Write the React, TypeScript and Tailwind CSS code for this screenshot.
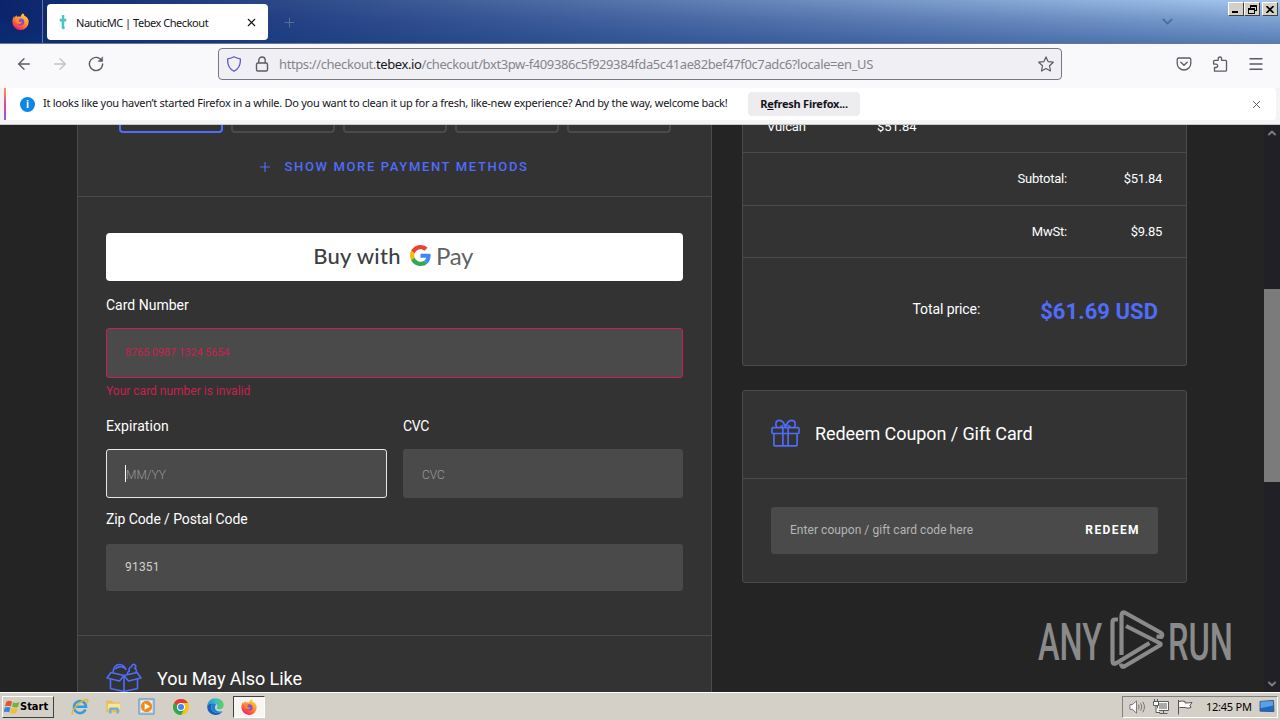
import React from 'react';
import { ArrowLeft, ArrowRight, ChevronDown, ChevronUp, Menu, Plus, X } from 'lucide-react';

const orders = [
  { label: 'Subtotal:', value: '$51.84', height: 'h-[53px]' },
  { label: 'MwSt:', value: '$9.85', height: 'h-[52px]' },
];

const FirefoxIcon: React.FC<{ className?: string }> = ({ className }) => (
  <svg viewBox="0 0 16 16" className={className}>
    <defs>
      <linearGradient id="ffx" x1="0.8" y1="0" x2="0.2" y2="1">
        <stop offset="0" stopColor="#ffd83b" />
        <stop offset="0.4" stopColor="#ff9a2b" />
        <stop offset="0.75" stopColor="#ff4a41" />
        <stop offset="1" stopColor="#e31587" />
      </linearGradient>
    </defs>
    <path
      d="M10.2 0.3c1 .8 1.4 1.700 1.600 2.600 1.100.3 2 1 2.500 1.600.9 1.100 1.400 2.500 1.400 4A7.600 7.400 0 0 1 .4 8.600C.3 6.400 1 4.400 2 2.900l.4 1.500C3 3.300 3.600 2.600 4.400 2l.3 1.700C6 3.200 7 3.300 7.800 3.800 8.600 2.300 9.200 1.200 10.200.3z"
      fill="url(#ffx)"
    />
    <circle cx="8.300" cy="8.400" r="3.200" fill="#8a4ad6" />
    <path d="M3.600 5.600c1.700-.6 3.100 0 4.200.7-1 .3-1.600.9-1.500 1.600 1 .8 2.400.6 3.200.3-.4 1.500-1.600 2.300-3 2.100C4.700 9.900 3.500 8 3.600 5.600z" fill="#ff8a2a" />
  </svg>
);

const GoogleG: React.FC<{ className?: string }> = ({ className }) => (
  <svg viewBox="0 0 48 48" className={className}>
    <path fill="#EA4335" d="M24 9.500c3.540 0 6.710 1.220 9.210 3.600l6.850-6.850C35.900 2.380 30.470 0 24 0 14.620 0 6.510 5.380 2.560 13.220l7.980 6.190C12.430 13.720 17.740 9.500 24 9.500z" />
    <path fill="#4285F4" d="M46.980 24.550c0-1.570-.15-3.090-.38-4.550H24v9.020h12.940c-.58 2.960-2.260 5.480-4.780 7.180l7.730 6c4.510-4.180 7.090-10.360 7.090-17.650z" />
    <path fill="#FBBC05" d="M10.530 28.590c-.48-1.450-.76-2.990-.76-4.590s.27-3.140.76-4.590l-7.980-6.190C.92 16.460 0 20.120 0 24c0 3.880.92 7.540 2.560 10.780l7.970-6.190z" />
    <path fill="#34A853" d="M24 48c6.480 0 11.930-2.130 15.890-5.810l-7.730-6c-2.150 1.450-4.920 2.300-8.160 2.300-6.260 0-11.570-4.220-13.470-9.910l-7.980 6.190C6.510 42.620 14.620 48 24 48z" />
  </svg>
);

const TabStrip: React.FC = () => (
  <div className="relative h-[44px] bg-[linear-gradient(90deg,#0a246a_0%,#a6caf0_100%)]">
    <div className="flex h-full border-b border-[#6c7893] bg-[linear-gradient(180deg,rgba(10,50,130,0)_0%,rgba(10,40,120,0.25)_45%,rgba(10,50,125,0.5)_100%)]">
      <div className="flex w-[43px] items-center justify-center border-r border-white/35">
        <FirefoxIcon className="-mt-px ml-[-2px] size-[17px]" />
      </div>
      <div className="mt-1 ml-1 flex h-9 w-[221px] items-center rounded bg-white">
        <svg viewBox="0 0 8 16" className="ml-[12px] h-[15px] w-[8px]">
          <path d="M3 0h2.300v4h2.200v2.800H5.300v5L6.200 14 4 15.500 2.600 14V6.800H.5V4H3z" fill="#48c6be" />
        </svg>
        <span className="ml-[9px] w-[132px] pt-[2px] text-[11px] tracking-[-0.46px] whitespace-nowrap text-[#15141a]">NauticMC | Tebex Checkout</span>
        <X className="ml-[37px] size-[13px] text-[#15141a]" strokeWidth={2} />
      </div>
      <Plus className="mt-[15px] ml-[14px] size-[15px] text-[#5c6f96]" strokeWidth={1.5} />
      <ChevronDown className="mt-[13px] ml-[862px] size-[17px] text-[#4d6a9f]" strokeWidth={2.4} />
    </div>
    <div className="absolute top-[2px] right-[2px] flex">
      <div className="flex h-[14px] w-[16px] items-end border border-t-white border-r-[#404040] border-b-[#404040] border-l-white bg-[#d4d0c8] pb-[2px] pl-[3px]">
        <div className="h-[2px] w-[6px] bg-black" />
      </div>
      <div className="flex h-[14px] w-[16px] items-center justify-center border border-t-white border-r-[#404040] border-b-[#404040] border-l-white bg-[#d4d0c8]">
        <svg viewBox="0 0 9 9" className="size-[9px]" shapeRendering="crispEdges" fill="none" stroke="#000">
          <path d="M2.500 3V.5h6v5H7M2 1.500h7M.5 3.500h6v5h-6zM0 4.500h7" />
        </svg>
      </div>
      <div className="ml-[2px] flex h-[14px] w-[16px] items-center justify-center border border-t-white border-r-[#404040] border-b-[#404040] border-l-white bg-[#d4d0c8]">
        <svg viewBox="0 0 8 7" className="h-[7px] w-[8px]" stroke="#000" strokeWidth="1.600">
          <path d="M.5 0l7 7M7.500 0l-7 7" />
        </svg>
      </div>
    </div>
  </div>
);

const NavBar: React.FC = () => (
  <div className="flex h-[44px] items-center bg-[#f9f9fb] pb-1 text-[#5b5b66]">
    <ArrowLeft className="ml-[15px] size-[18px]" strokeWidth={1.8} />
    <ArrowRight className="ml-[18px] size-[18px] text-[#c0c0c6]" strokeWidth={1.8} />
    <svg viewBox="0 0 16 16" className="ml-[19px] size-[16px]" fill="none" stroke="currentColor" strokeWidth="1.400" strokeLinecap="round">
      <path d="M13.600 4.500A6.600 6.600 0 1 0 14.600 8" />
      <path d="M14.600 1.200v4.200h-4.200z" fill="currentColor" strokeWidth="0.600" />
    </svg>
    <div className="ml-[114px] flex h-8 w-[844px] items-center rounded border border-[#77777f] bg-[#f0f0f4]">
      <svg viewBox="0 0 16 16" className="ml-[7px] size-4" fill="none" stroke="#5f57c4" strokeWidth="1.300" strokeLinejoin="round">
        <path d="M8 .8c1.800 1.100 4 1.700 6.300 2C14.800 8.500 12.300 13 8 15.300 3.700 13 1.200 8.500 1.700 2.800 4 2.500 6.200 1.900 8 .8z" />
      </svg>
      <svg viewBox="0 0 16 16" className="ml-[12px] size-4" fill="none" stroke="#5b5b66" strokeWidth="1.400">
        <rect x="2.500" y="7" width="11" height="8" rx="1.500" />
        <path d="M4.800 7V4.200a3.200 3.200 0 0 1 6.400 0V7" />
      </svg>
      <span className="ml-[9px] w-[600px] pt-px text-[13px] tracking-[-0.395px] whitespace-nowrap text-[#85858d]">
        https://checkout.<span className="text-[#15141a]">tebex.io</span>/checkout/bxt3pw-f409386c5f929384fda5c41ae82bef47f0c7adc6?locale=en_US
      </span>
      <svg viewBox="0 0 16 16" className="mr-[7px] ml-auto size-4" fill="none" stroke="#5b5b66" strokeWidth="1.200" strokeLinejoin="round">
        <path d="M8 .9l2.100 4.700 5.200.6-3.800 3.500 1 5.300L8 12.400 3.500 15l1-5.300L.7 6.200l5.200-.6z" />
      </svg>
    </div>
    <svg viewBox="0 0 16 16" className="ml-[114px] size-4" fill="none" stroke="currentColor" strokeWidth="1.300" strokeLinecap="round" strokeLinejoin="round">
      <path d="M2.700 2h10.600a1.500 1.500 0 0 1 1.500 1.500v3.700a6.800 6.800 0 0 1-13.600 0V3.500A1.500 1.500 0 0 1 2.700 2z" />
      <path d="M4.800 6.200L8 9.300l3.200-3.100" />
    </svg>
    <svg viewBox="0 0 16 16" className="ml-[20px] size-4" fill="none" stroke="currentColor" strokeWidth="1.300" strokeLinejoin="round">
      <path d="M2.500 15.200V11.500H4a1.700 1.700 0 0 0 0-3.400H1.600V5.300a1 1 0 0 1 1-1h3.600V2.700a1.700 1.700 0 0 1 3.400 0v1.600h3.900a1 1 0 0 1 1 1v8.900a1 1 0 0 1-1 1z" />
    </svg>
    <Menu className="ml-[19px] size-[18px]" strokeWidth={1.8} />
  </div>
);

const Notice: React.FC = () => (
  <div className="h-[37px] border-b border-[#c9c9cc] bg-[#f4f4f5] pr-1 pl-1">
    <div className="flex h-8 items-center rounded bg-white">
      <div className="h-8 w-[2px] bg-[linear-gradient(180deg,#f2975a,#e0479a_50%,#9059d8)]" />
      <div className="ml-[14px] flex size-[15px] items-center justify-center rounded-full bg-[#0d87e5] text-[10px] leading-none font-bold text-white">i</div>
      <span className="ml-[8px] w-[690px] pb-px text-[11px] tracking-[-0.265px] whitespace-nowrap text-[#15141a]">
        It looks like you haven’t started Firefox in a while. Do you want to clean it up for a fresh, like-new experience? And by the way, welcome back!
      </span>
      <button className="ml-[15px] h-6 w-[112px] rounded bg-[#ededf0] text-[11px] font-bold tracking-[-0.25px] whitespace-nowrap text-[#15141a]">
        R<span className="underline">e</span>fresh Firefox...
      </button>
      <X className="mr-[13px] ml-auto size-[13px] text-[#5b5b66]" strokeWidth={1.8} />
    </div>
  </div>
);

const GiftIcon: React.FC = () => (
  <svg viewBox="0 0 30 28" className="h-[28px] w-[29px]" fill="none" stroke="#4f6dfa" strokeWidth="1.700" strokeLinejoin="round">
    <rect x="1" y="8.500" width="28" height="6" rx="1" />
    <path d="M3 14.500v11.800a1 1 0 0 0 1 1h22a1 1 0 0 0 1-1V14.500M12.300 8.500v18.800M17.700 8.500v18.800" />
    <path d="M15 8.500C14 4 11.500 1 8.500 1 5 1 4 4.500 6 8.500M15 8.500C16 4 18.500 1 21.500 1 25 1 26 4.500 24 8.500M9.500 8.500c.5-1.500 1.500-2.200 3.500-2.500M20.500 8.500c-.5-1.500-1.500-2.200-3.500-2.500" />
  </svg>
);

const BoxIcon: React.FC = () => (
  <svg viewBox="0 0 36 30" className="h-[30px] w-[36px]" fill="none" stroke="#4f6dfa" strokeWidth="1.600" strokeLinejoin="round">
    <path d="M5 9.500L18 12.500 31 9.500 35 15 22.500 18 18 12.500l-4.500 5.500L1 15z" />
    <path d="M4.500 16v9.500L18 28.500l13.500-3V16M18 12.500v16" />
    <path d="M7 9.500C7.500 4.500 10 1.500 13.500 1.500S19 4 20 7M9.500 6c1.500-2 6-3.500 10-.5M21.500 11c0-2 1-3 2.500-3M23.500 8c-1-2 0-4 2-4 0-2 2-3.500 3.500-2 1.500 1 .5 3-.5 3.500 2 0 2.500 2 1 4.500" />
  </svg>
);

const PaymentPanel: React.FC = () => (
  <section className="flex h-[600px] w-[635px] flex-col border-x border-[#4b4b4b] bg-[#333]">
    <div className="flex h-[72px] flex-col items-center border-b border-[#4b4b4b]">
      <div className="flex gap-2">
        <div className="h-2 w-[104px] rounded-b border-2 border-t-0 border-[#4f6dfa]" />
        <div className="h-2 w-[104px] rounded-b border-2 border-t-0 border-[#4a4a4a]" />
        <div className="h-2 w-[104px] rounded-b border-2 border-t-0 border-[#4a4a4a]" />
        <div className="h-2 w-[104px] rounded-b border-2 border-t-0 border-[#4a4a4a]" />
        <div className="h-2 w-[104px] rounded-b border-2 border-t-0 border-[#4a4a4a]" />
      </div>
      <button className="mt-[26px] flex h-4 w-[270px] items-center text-[#4f6dfa]">
        <svg viewBox="0 0 10 10" className="size-[10px] shrink-0" stroke="currentColor" strokeWidth="1.200">
          <path d="M5 0v10M0 5h10" />
        </svg>
        <span className="ml-[15px] text-[13px] font-medium tracking-[1.65px] whitespace-nowrap">SHOW MORE PAYMENT METHODS</span>
      </button>
    </div>
    <div className="h-[439px] shrink-0 border-b border-[#4b4b4b] px-7 pt-9 text-[14px] text-white">
      <button className="flex h-12 w-full items-center rounded bg-white pb-[3px] font-[Lato,sans-serif]">
        <span className="ml-[206px] w-[90px] text-[22px] font-medium tracking-[0.3px] whitespace-nowrap text-[#3c4043]">Buy with</span>
        <GoogleG className="ml-[8px] size-[21px]" />
        <span className="ml-[5px] text-[24px] tracking-[-0.3px] whitespace-nowrap text-[#5f6368]">Pay</span>
      </button>
      <div className="mt-[14px] h-5 leading-5">Card Number</div>
      <div className="mt-[13px] flex h-[50px] items-center rounded-[3px] border border-[#c9214f] bg-[#4a4a4a] pl-[18px] text-[11px] tracking-[-0.15px] text-[#c9214f]">8765 0987 1324 5654</div>
      <div className="mt-[5px] h-4 text-[12px] leading-4 text-[#c9214f]">Your card number is invalid</div>
      <div className="mt-[17px] flex gap-4">
        <div className="w-[281px]">
          <div className="h-5 leading-5 tracking-[0.1px]">Expiration</div>
          <div className="mt-[13px] flex h-[49px] items-center rounded-[3px] border border-[#e8e8e8] bg-[#4a4a4a] pl-[18px]">
            <div className="h-[17px] w-px bg-white" />
            <span className="pt-[2px] text-[12px] font-light text-[#9a9a9a]">MM/YY</span>
          </div>
        </div>
        <div className="w-[280px]">
          <div className="h-5 leading-5 tracking-[-0.3px]">CVC</div>
          <div className="mt-[13px] flex h-[49px] items-center rounded-[3px] bg-[#4a4a4a] pt-[2px] pl-[19px] text-[12px] font-light text-[#9a9a9a]">CVC</div>
        </div>
      </div>
      <div className="mt-[11px] h-5 leading-5 tracking-[-0.1px]">Zip Code / Postal Code</div>
      <div className="mt-[15px] flex h-[47px] items-center rounded-[3px] bg-[#4a4a4a] pb-px pl-[19px] text-[12px] tracking-[0.2px] text-[#d0d0d0]">91351</div>
    </div>
    <div className="flex items-start pt-[27px] pl-7">
      <BoxIcon />
      <h2 className="ml-[15px] h-8 text-[18px] leading-8 tracking-[-0.06px] whitespace-nowrap text-white">You May Also Like</h2>
    </div>
  </section>
);

const Summary: React.FC = () => (
  <aside className="ml-[30px] w-[445px] text-white">
    <div className="h-[241px] rounded-b-[3px] border border-t-0 border-[#4b4b4b] bg-[#333] text-[13px] tracking-[-0.3px]">
      <div className="flex h-7 border-b border-[#4b4b4b] leading-4 tracking-[-0.1px]">
        <span className="mt-[-6px] ml-6 w-[110px]">Vulcan</span>
        <span className="mt-[-6px]">$51.84</span>
      </div>
      {orders.map((row) => (
        <div key={row.label} className={`flex items-center justify-end border-b border-[#4b4b4b] pr-6 ${row.height}`}>
          <span className="tracking-[-0.2px]">{row.label}</span>
          <span className="w-[95px] text-right">{row.value}</span>
        </div>
      ))}
      <div className="flex h-[107px] items-center justify-end pr-7 tracking-normal">
        <span className="mt-[-4px] mr-[60px] text-[14px] tracking-[-0.1px]">Total price:</span>
        <span className="text-[22px] font-bold tracking-[0.05px] whitespace-nowrap text-[#4f6dfa]">$61.69 USD</span>
      </div>
    </div>
    <div className="mt-6 h-[193px] rounded-[3px] border border-[#4b4b4b] bg-[#333]">
      <div className="flex h-[88px] items-center border-b border-[#4b4b4b] pb-[3px] pl-7">
        <GiftIcon />
        <h2 className="ml-[15px] text-[18px] tracking-[-0.08px] whitespace-nowrap">Redeem Coupon / Gift Card</h2>
      </div>
      <div className="mx-7 mt-7 flex h-[47px] items-center justify-between rounded-[3px] bg-[#4a4a4a] pr-[18px] pb-[2px] pl-[19px]">
        <span className="text-[12px] tracking-[0.05px] text-[#b5b5b5]">Enter coupon / gift card code here</span>
        <span className="text-[12px] font-bold tracking-[1.4px]">REDEEM</span>
      </div>
    </div>
  </aside>
);

const Watermark: React.FC = () => (
  <svg viewBox="0 0 200 64" className="absolute top-[484px] left-[1038px] h-[64px] w-[200px]" fill="#8a8a8a">
    <text x="0" y="51" fontSize="52" fontWeight="500" fontFamily="Roboto, sans-serif" textLength="64" lengthAdjust="spacingAndGlyphs">ANY</text>
    <text x="130" y="51" fontSize="52" fontWeight="500" fontFamily="Roboto, sans-serif" textLength="65" lengthAdjust="spacingAndGlyphs">RUN</text>
    <g fill="none" stroke="#8a8a8a" strokeWidth="4.200" strokeLinejoin="round">
      <path d="M83.500 46V7q0-5 4-3l35 19.500q3 2 1 4.500l-5-.5" />
      <path d="M80 10.500h-3q-2.500 0-2.500 3V52q0 4 4 2l33-20" />
      <path d="M88 17l34.500 17.500v1.500L87 57q-4 2-4-2.500" />
    </g>
  </svg>
);

const Taskbar: React.FC = () => (
  <footer className="flex h-7 items-center border-t border-white bg-[#d4d0c8] text-black">
    <div className="ml-[2px] flex h-[22px] w-[52px] items-center border border-t-white border-r-[#404040] border-b-[#404040] border-l-white text-[12px] font-bold">
      <svg viewBox="0 0 16 16" className="ml-px size-[16px] shrink-0">
        <path d="M2.500 2.500q3-1.500 5.500.3L6.800 7.500Q4 6 1 7.300z" fill="#e5532a" />
        <path d="M9 3.200q3 1.500 6.500-.2L14 8q-3 1.200-6-.3z" fill="#72b43a" />
        <path d="M.8 8.500Q4 7.200 6.500 8.700L5.200 13.300Q2.500 12-.5 13.300z" fill="#3a85d8" />
        <path d="M7.500 9q3 1.500 6.200.2L12.300 14q-3 1.300-6-.3z" fill="#f5bd27" />
      </svg>
      <span className="pt-[2px] font-['DejaVu_Sans_Condensed','DejaVu_Sans',sans-serif] text-[11px]">Start</span>
    </div>
    <svg viewBox="0 0 18 18" className="ml-[17px] size-[18px]" fill="none">
      <path d="M14.500 11.500A6 6 0 1 1 15 8.800H5" stroke="#3a9bdc" strokeWidth="2.600" />
      <path d="M1.500 16.500C-.5 13 9 2.500 15.500 1.500c2 0 1.300 2.500.5 3.500" stroke="#e9b52c" strokeWidth="1.400" />
    </svg>
    <svg viewBox="0 0 18 18" className="ml-[16px] size-[17px]">
      <path d="M1.500 3h6l1.200 1.800h7.300V15H1.500z" fill="#e8bd55" />
      <path d="M3 6h13v6H3z" fill="#f8e49a" />
      <path d="M4.500 16.500v-5q0-1.500 1.500-1.500h7q1.500 0 1.500 1.500v5h-2.300v-4H6.800v4z" fill="#6aafd8" />
    </svg>
    <svg viewBox="0 0 18 18" className="ml-[16px] size-[17px]">
      <path d="M1 1h16v16H1z" fill="#b9d8ee" stroke="#548dbd" />
      <path d="M3 3h12v12H3z" fill="#e8f3fa" />
      <circle cx="9" cy="9" r="6" fill="#f08a19" />
      <path d="M7 5.500v7L12.800 9z" fill="#fff" />
    </svg>
    <svg viewBox="0 0 16 16" className="ml-[18px] size-[16px]">
      <circle cx="8" cy="8" r="8" fill="#fbc116" />
      <path d="M1.070 4A8 8 0 0 0 8 16l3.500-6L8 8z" fill="#2da94f" />
      <path d="M1.070 4a8 8 0 0 1 13.860 0H8l-3.500 2.600z" fill="#e33b2e" />
      <circle cx="8" cy="8" r="4" fill="#fff" />
      <circle cx="8" cy="8" r="3" fill="#4285f4" />
    </svg>
    <svg viewBox="0 0 16 16" className="ml-[18px] size-[17px]">
      <defs>
        <linearGradient id="edge" x1="0" y1="0" x2="1" y2="0">
          <stop offset="0" stopColor="#2193d8" />
          <stop offset="0.500" stopColor="#35bfc8" />
          <stop offset="1" stopColor="#5fd455" />
        </linearGradient>
      </defs>
      <path d="M.2 7.500C.7 3 4 .2 8 .2c4.500 0 7.800 3 7.800 6.500 0 2.500-2 4-4 4-1.500 0-2.600-.4-2.600-1 0-.4.700-.7.700-1.700C9.900 6 8 5 6 5 3.500 5 1 6 .2 7.500z" fill="url(#edge)" />
      <path d="M.2 7.500C1 6 3.500 5 6 5c-1.600 1-2 2.300-2 3.700 0 3.600 3 5.300 6 5.300 1.800 0 3.200-.5 4.500-1.500C13.500 14.500 11 16 8 16 3.500 16 0 12.500.2 7.500z" fill="#1560b8" />
      <path d="M6 5C4.400 6 4 7.300 4 8.700c0 3.600 3 5.300 6 5.300 1.800 0 3.200-.5 4.500-1.500-3.500 1-7-.5-7-3.500C7.500 7.700 8 7 8.500 6.200 8 5.500 7 5 6 5z" fill="#1d7fd0" />
    </svg>
    <div className="ml-[9px] flex h-[22px] w-[32px] items-center justify-center border border-t-[#404040] border-r-white border-b-white border-l-[#404040] bg-[#f7f6f3]">
      <FirefoxIcon className="size-4" />
    </div>
    <div className="mr-[2px] ml-auto flex h-[22px] w-[156px] items-center border border-t-[#808080] border-r-white border-b-white border-l-[#808080] text-[11px]">
      <svg viewBox="0 0 18 16" className="ml-[6px] h-4 w-[17px]" fill="none" stroke="#6f6f6f">
        <path d="M1 5.500h2.500L8 1.500v13l-4.500-4H1z" fill="#fff" />
        <path d="M10 5.500q1.500 2.500 0 5M12.300 4q2.500 4 0 8M14.600 2.500q3.500 5.500 0 11" />
      </svg>
      <svg viewBox="0 0 16 16" className="ml-[7px] size-4" fill="none" stroke="#5c5c5c">
        <path d="M4.500 2.500h11v9h-11z" fill="#fff" />
        <path d="M6 4h8v6H6z" fill="#a9a9a9" stroke="none" />
        <path d="M6.500 14.500h8M10.500 12v2" />
        <path d="M.5 2.500h5v4h-5zM1.500 0v2M4.500 0v2M3 6.500v7h4" fill="#fff" />
      </svg>
      <svg viewBox="0 0 16 16" className="ml-[8px] size-4" fill="#fff" stroke="#555">
        <path d="M2 2.500q3-1 6 0v1.500q3 0 7-.5l-2 3 1 2q-3 1.500-6 0H2.500" />
        <path d="M1.500 1v14.500" />
      </svg>
      <span className="ml-[13px] w-[46px] pt-px text-[11px] tracking-[-0.25px] whitespace-nowrap">12:45 PM</span>
      <svg viewBox="0 0 16 14" className="mr-[2px] ml-auto h-[13px] w-[16px]">
        <path d="M.5 1.500L15 .5l.5 12L.5 12z" fill="#1f67c4" stroke="#37587c" />
        <path d="M1 2l13.500-1v5L1 9z" fill="#5ba0e6" />
      </svg>
    </div>
  </footer>
);

export default function App() {
  return (
    <div className="flex h-[720px] w-[1280px] flex-col overflow-hidden font-['Noto_Sans',sans-serif]">
      <TabStrip />
      <NavBar />
      <Notice />
      <main className="relative flex h-[567px] overflow-hidden bg-[#242424] font-[Roboto,sans-serif]">
        <div className="flex w-[1264px] items-start pl-[77px]">
          <PaymentPanel />
          <Summary />
        </div>
        <div className="flex w-4 flex-col items-center bg-[#212027] text-[#7b7b7b]">
          <ChevronUp className="mt-[2px] size-3" strokeWidth={4} />
          <div className="mt-[150px] h-[193px] w-4 bg-[#7b7b7b]" />
          <ChevronDown className="mt-auto mb-[2px] size-3" strokeWidth={4} />
        </div>
        <Watermark />
      </main>
      <Taskbar />
    </div>
  );
}
